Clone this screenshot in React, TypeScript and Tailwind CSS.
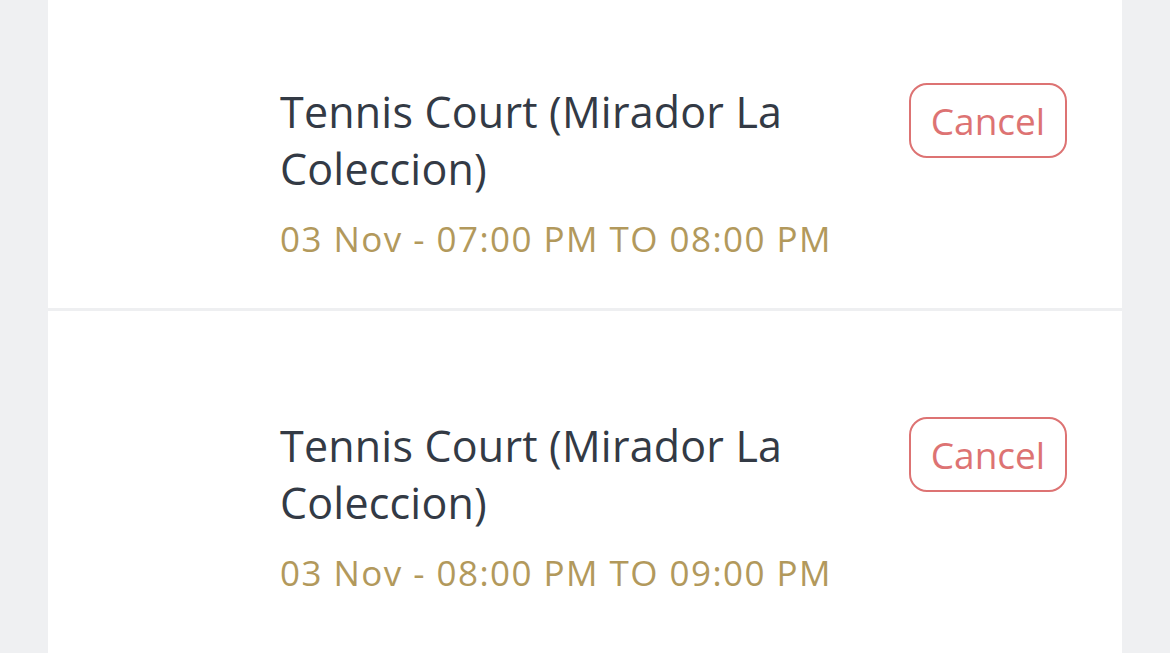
const bookings = [
  { id: 1, name: 'Tennis Court (Mirador La Coleccion)', date: '03 Nov', from: '07:00 PM', to: '08:00 PM' },
  { id: 2, name: 'Tennis Court (Mirador La Coleccion)', date: '03 Nov', from: '08:00 PM', to: '09:00 PM' },
];

export default function App() {
  return (
    <div className="h-[653px] overflow-hidden bg-[#eff0f2] px-[48px] font-['Open_Sans','Noto_Sans',sans-serif]">
      <div className="-mt-[23px] min-h-[720px] bg-white">
        {bookings.map((item, index) => (
          <div
            key={item.id}
            className={`flex items-start pl-[232px] pr-[55px] pt-[106px] pb-[45px] ${index > 0 ? 'border-t-[3px] border-[#eeeff1]' : ''}`}
          >
            <div className="flex-1 pr-[50px]">
              <p className="text-[43px] leading-[57px] tracking-[0.2px] text-[#333a45]">{item.name}</p>
              <p className="mt-[18px] text-[35px] leading-[48px] tracking-[1.45px] text-[#b2995c]">
                {item.date} - {item.from} TO {item.to}
              </p>
            </div>
            <button className="h-[75px] w-[158px] shrink-0 rounded-[18px] border-2 border-[#dd7373] text-[37px] leading-none text-[#dd7373]">
              Cancel
            </button>
          </div>
        ))}
      </div>
    </div>
  );
}
